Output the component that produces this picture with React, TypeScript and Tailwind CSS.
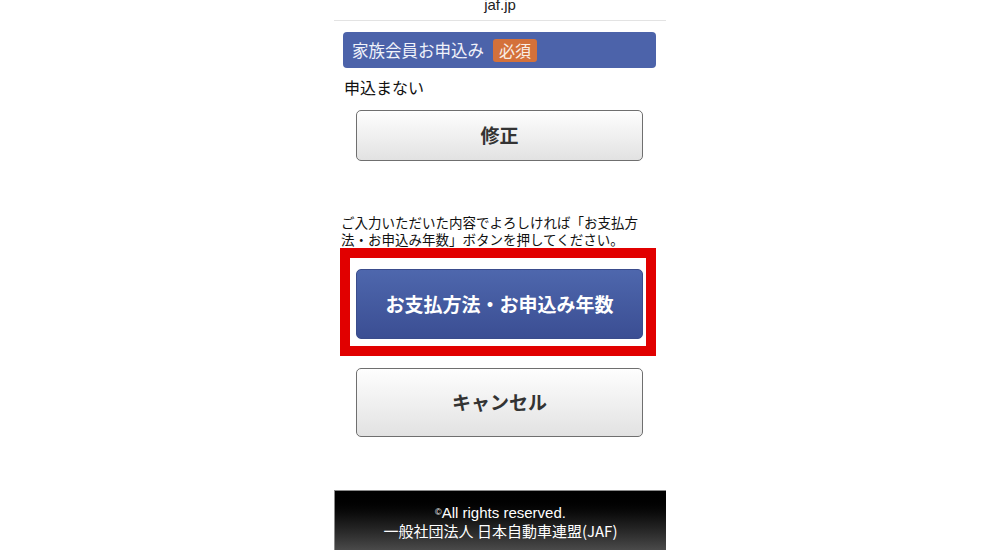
import React from "react";

const jp = { fontFamily: '"Noto Sans CJK JP", "Noto Sans", sans-serif' };

export default function App() {
  return (
    <div className="w-[1000px] h-[550px] bg-white overflow-hidden" style={jp}>
      <div className="mx-auto w-[332px] h-[550px] flex flex-col">
        <div className="h-[21px] border-b border-[#e3e3e3] flex justify-center overflow-hidden">
          <span className="text-[15px] leading-[15px] -mt-[3px] text-[#222]" style={{ fontFamily: '"Liberation Sans", Arial, sans-serif' }}>jaf.jp</span>
        </div>
        <div className="mt-[11px] ml-[9px] mr-[10px] h-[36px] rounded-[4px] bg-[#4c63aa] flex items-center pl-[9px] gap-[9px]">
          <span className="text-[16.5px] leading-none text-[#f0f2fa]">家族会員お申込み</span>
          <span className="bg-[#d4713a] text-[#f8eee6] text-[16px] leading-none rounded-[3px] px-[6px] h-[23px] flex items-center">必須</span>
        </div>
        <div className="mt-[9px] ml-[10px] text-[16px] leading-[20px] text-[#111]">申込まない</div>
        <button className="mt-[13px] ml-[22px] w-[287px] h-[51px] rounded-[5px] border border-[#6f6f6f] bg-gradient-to-b from-[#fefefe] to-[#e2e2e2] text-[19px] font-bold text-[#333]">
          修正
        </button>
        <p className="mt-[53px] ml-[7px] w-[305px] text-[13.5px] leading-[17px] text-[#111]">
          ご入力いただいた内容でよろしければ「お支払方法・お申込み年数」ボタンを押してください。
        </p>
        <div className="ml-[6px] w-[316px] h-[108px] border-[10px] border-[#e10000] pt-[11px] pl-[6px]">
          <button className="w-[287px] h-[70px] rounded-[5px] border border-[#3a4c8c] bg-gradient-to-b from-[#4e67ad] to-[#3b4e93] text-[19px] font-bold text-white">
            お支払方法・お申込み年数
          </button>
        </div>
        <button className="mt-[12px] ml-[22px] w-[287px] h-[69px] rounded-[5px] border border-[#6f6f6f] bg-gradient-to-b from-[#fefefe] to-[#e2e2e2] text-[19px] font-bold text-[#333]">
          キャンセル
        </button>
        <div className="mt-auto h-[60px] bg-gradient-to-b from-[#000000] to-[#4a4a4a] border-t border-l border-[#8a8a8a] flex flex-col items-center justify-center text-white text-[15px] leading-[18px] pt-[1px]">
          <div style={{ fontFamily: '"Liberation Sans", Arial, sans-serif' }}>
            <span className="text-[9px] align-[3px]">©</span>All rights reserved.
          </div>
          <div>一般社団法人 日本自動車連盟(JAF)</div>
        </div>
      </div>
    </div>
  );
}
